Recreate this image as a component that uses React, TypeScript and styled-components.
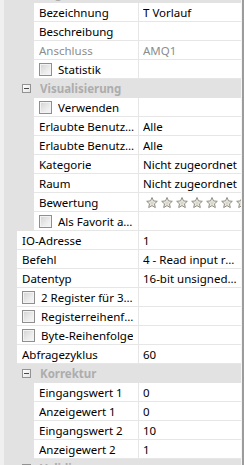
import React from "react";
import styled, { createGlobalStyle } from "styled-components";

const GlobalStyle = createGlobalStyle`
    html, body {
        margin: 0;
        padding: 0;
        background: #f0f0f0;
        overflow: hidden;
    }
    body {
        font-family: "Noto Sans", "Open Sans", "DejaVu Sans", sans-serif;
        font-size: 11.5px;
        color: #000;
    }
`;

const ROW_H = 19;
const VALUE_W = 102;

const Frame = styled.div`
    width: 244px;
    height: 465px;
    display: flex;
    overflow: hidden;
    box-sizing: border-box;
    padding-left: 4px;
    border-right: 2px solid #9c9c9c;
`;

const Grid = styled.div`
    flex: 1;
    display: flex;
    flex-direction: column;
    margin-top: -16px;
    border-right: 1px solid #f6f6f6;
    background: #e2e2e2;
`;

const CategoryRow = styled.div`
    height: ${ROW_H}px;
    flex: none;
    display: flex;
    align-items: center;
    background: #e2e2e2;
    padding-left: 18px;
    gap: 9px;
    font-weight: bold;
    color: #adadad;
    white-space: nowrap;
    overflow: hidden;
`;

const Collapse = styled.span`
    width: 9px;
    height: 9px;
    box-sizing: border-box;
    border: 1px solid #939393;
    background: linear-gradient(135deg, #ffffff, #e4e4e4);
    display: flex;
    align-items: center;
    justify-content: center;
    flex: none;
    &::after {
        content: "";
        width: 5px;
        height: 1px;
        background: #4a4a4a;
    }
`;

const Row = styled.div<{ $indent: number }>`
    height: ${ROW_H}px;
    flex: none;
    display: grid;
    grid-template-columns: ${p => p.$indent}px 1fr ${VALUE_W}px;
`;

const Margin = styled.div`
    background: #e2e2e2;
`;

const Label = styled.div<{ $disabled?: boolean }>`
    background: #fff;
    border-bottom: 1px solid #e6e6e6;
    border-right: 1px solid #e6e6e6;
    display: flex;
    align-items: center;
    gap: 6px;
    padding: 0 2px 0 5px;
    min-width: 0;
    overflow: hidden;
    color: ${p => (p.$disabled ? "#8d8d8d" : "#000")};
`;

const LabelText = styled.span`
    white-space: nowrap;
    overflow: hidden;
    text-overflow: ellipsis;
    min-width: 0;
`;

const Value = styled.div<{ $disabled?: boolean }>`
    background: #fff;
    border-bottom: 1px solid #e6e6e6;
    display: flex;
    align-items: center;
    padding-left: 4px;
    overflow: hidden;
    white-space: nowrap;
    color: ${p => (p.$disabled ? "#8d8d8d" : "#000")};
`;

const ValueText = styled.span`
    overflow: hidden;
    text-overflow: ellipsis;
    padding-right: 3px;
`;

const CheckBox = styled.span`
    width: 13px;
    height: 13px;
    flex: none;
    box-sizing: border-box;
    border: 1px solid #8f8f8f;
    background: linear-gradient(135deg, #d2d2d2 0%, #ececec 60%, #f7f7f7 100%);
    box-shadow: inset 0 0 0 1px #f3f3f3;
    margin-top: 1px;
`;

const Stars = styled.div`
    display: flex;
    gap: 3px;
    padding-left: 3px;
    margin-top: 2px;
    flex: none;
`;

const Star = styled.svg`
    width: 12px;
    height: 12px;
    flex: none;
`;

function StarIcon() {
    return (
        <Star viewBox="0 0 12 12">
            <path
                d="M6 0.5 L7.5 3.9 L11.3 4.3 L8.5 6.8 L9.3 10.6 L6 8.6 L2.7 10.6 L3.5 6.8 L0.7 4.3 L4.5 3.9 Z"
                fill="#eeebe2"
                stroke="#8e8d86"
                strokeWidth="1"
                strokeLinejoin="round"
            />
            <path d="M6 3.6 L6.7 5.3 L8.4 5.5 L7.1 6.6 L7.5 8.2 L6 7.3 L4.5 8.2 L4.9 6.6 L3.6 5.5 L5.3 5.3 Z" fill="#d9d5c8" />
        </Star>
    );
}

type Prop = {
    label: string;
    value?: string;
    check?: boolean;
    disabled?: boolean;
    stars?: boolean;
    nested?: boolean;
};

function PropRow({ label, value, check, disabled, stars, nested }: Prop) {
    return (
        <Row $indent={nested ? 30 : 13}>
            <Margin />
            <Label $disabled={disabled}>
                {check && <CheckBox />}
                <LabelText>{label}</LabelText>
            </Label>
            <Value $disabled={disabled}>
                {stars ? (
                    <Stars>
                        {Array.from({ length: 7 }).map((_, i) => (
                            <StarIcon key={i} />
                        ))}
                    </Stars>
                ) : (
                    <ValueText>{value}</ValueText>
                )}
            </Value>
        </Row>
    );
}

function Category({ title }: { title: string }) {
    return (
        <CategoryRow>
            <Collapse />
            {title}
        </CategoryRow>
    );
}

export default function App() {
    return (
        <>
            <GlobalStyle />
            <Frame>
                <Grid>
                    <Category title="Allgemein" />
                    <PropRow nested label="Bezeichnung" value="T Vorlauf" />
                    <PropRow nested label="Beschreibung" />
                    <PropRow nested label="Anschluss" value="AMQ1" disabled />
                    <PropRow nested check label="Statistik" />
                    <Category title="Visualisierung" />
                    <PropRow nested check label="Verwenden" />
                    <PropRow nested label="Erlaubte Benutzer lesen" value="Alle" />
                    <PropRow nested label="Erlaubte Benutzer schreiben" value="Alle" />
                    <PropRow nested label="Kategorie" value="Nicht zugeordnet" />
                    <PropRow nested label="Raum" value="Nicht zugeordnet" />
                    <PropRow nested label="Bewertung" stars />
                    <PropRow nested check label="Als Favorit anzeigen" />
                    <PropRow label="IO-Adresse" value="1" />
                    <PropRow label="Befehl" value="4 - Read input register" />
                    <PropRow label="Datentyp" value="16-bit unsigned integer" />
                    <PropRow check label="2 Register für 32-Bit" />
                    <PropRow check label="Registerreihenfolge" />
                    <PropRow check label="Byte-Reihenfolge" />
                    <PropRow label="Abfragezyklus" value="60" />
                    <Category title="Korrektur" />
                    <PropRow nested label="Eingangswert 1" value="0" />
                    <PropRow nested label="Anzeigewert 1" value="0" />
                    <PropRow nested label="Eingangswert 2" value="10" />
                    <PropRow nested label="Anzeigewert 2" value="1" />
                    <Category title="Validierung" />
                </Grid>
            </Frame>
        </>
    );
}
